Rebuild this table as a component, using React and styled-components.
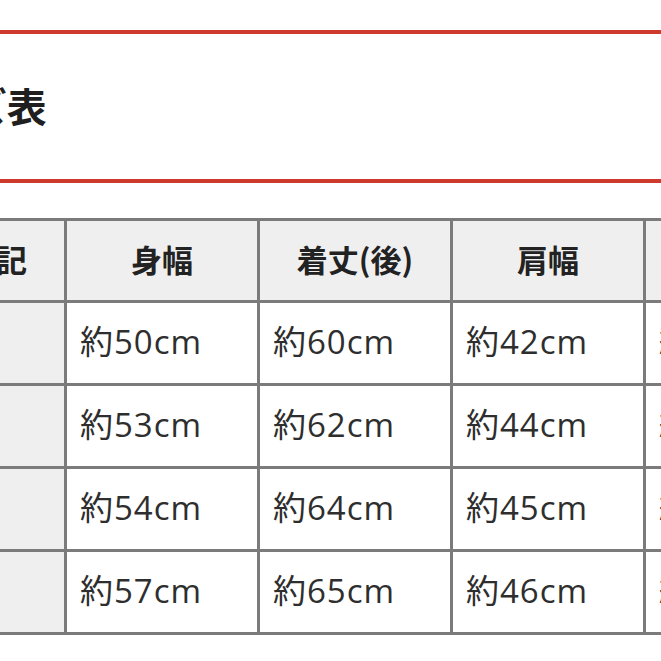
import styled, { createGlobalStyle } from "styled-components";

const GlobalStyle = createGlobalStyle`
  html, body {
    margin: 0;
    padding: 0;
    background: #ffffff;
    overflow: hidden;
  }
  body {
    width: 661px;
    height: 661px;
    font-family: "Open Sans", "Noto Sans CJK JP", sans-serif;
    color: #2b2b2b;
  }
`;

const rows = [
  { label: "S", values: ["約50cm", "約60cm", "約42cm", "約60cm"] },
  { label: "M", values: ["約53cm", "約62cm", "約44cm", "約61cm"] },
  { label: "L", values: ["約54cm", "約64cm", "約45cm", "約62cm"] },
  { label: "XL", values: ["約57cm", "約65cm", "約46cm", "約63cm"] },
];

const headers = ["身幅", "着丈(後)", "肩幅", "袖丈"];

export default function App() {
  return (
    <>
      <GlobalStyle />
      <Page>
        <Heading>
          <Title>サイズ表</Title>
        </Heading>
        <Table>
          <HeadCell $first>サイズ表記</HeadCell>
          {headers.map((h) => (
            <HeadCell key={h}>{h}</HeadCell>
          ))}
          {rows.map((row) => (
            <Row key={row.label}>
              <LabelCell>{row.label}</LabelCell>
              {row.values.map((v, i) => (
                <Cell key={i}>{v}</Cell>
              ))}
            </Row>
          ))}
        </Table>
        <Divider />
      </Page>
    </>
  );
}

const Page = styled.div`
  padding-top: 30px;
  width: 661px;
`;

const Heading = styled.div`
  border-top: 4px solid #cf3a2f;
  border-bottom: 4px solid #cf3a2f;
  height: 145px;
  display: flex;
  align-items: center;
`;

const Title = styled.h2`
  margin: 0 0 4px -112px;
  font-size: 40px;
  font-weight: 700;
  color: #1f1f1f;
  white-space: nowrap;
  font-family: "Noto Sans CJK JP", sans-serif;
`;

const Table = styled.div`
  margin-top: 35px;
  margin-left: -129px;
  width: max-content;
  display: grid;
  grid-template-columns: repeat(5, 190px);
  grid-template-rows: 79px repeat(4, 80px);
  gap: 3px;
  padding: 3px;
  background: #7b7b7b;
`;

const Row = styled.div`
  display: contents;
`;

const HeadCell = styled.div`
  background: #efefef;
  display: flex;
  align-items: center;
  justify-content: ${(p) => (p.$first ? "flex-end" : "center")};
  padding: ${(p) => (p.$first ? "0 37px 5px 0" : "0 0 5px 0")};
  font-size: 31px;
  font-weight: 700;
  color: #222;
  white-space: nowrap;
  overflow: hidden;
  font-family: "Noto Sans CJK JP", sans-serif;
`;

const Cell = styled.div`
  background: #ffffff;
  display: flex;
  align-items: center;
  padding: 0 0 6px 13px;
  font-size: 33px;
  color: #2e2e2e;
  letter-spacing: 1px;
  white-space: nowrap;
`;

const LabelCell = styled(Cell)`
  background: #efefef;
  justify-content: center;
  padding-left: 0;
`;

const Divider = styled.div`
  margin-top: 26px;
  height: 2px;
  background: #9a9a9a;
`;
